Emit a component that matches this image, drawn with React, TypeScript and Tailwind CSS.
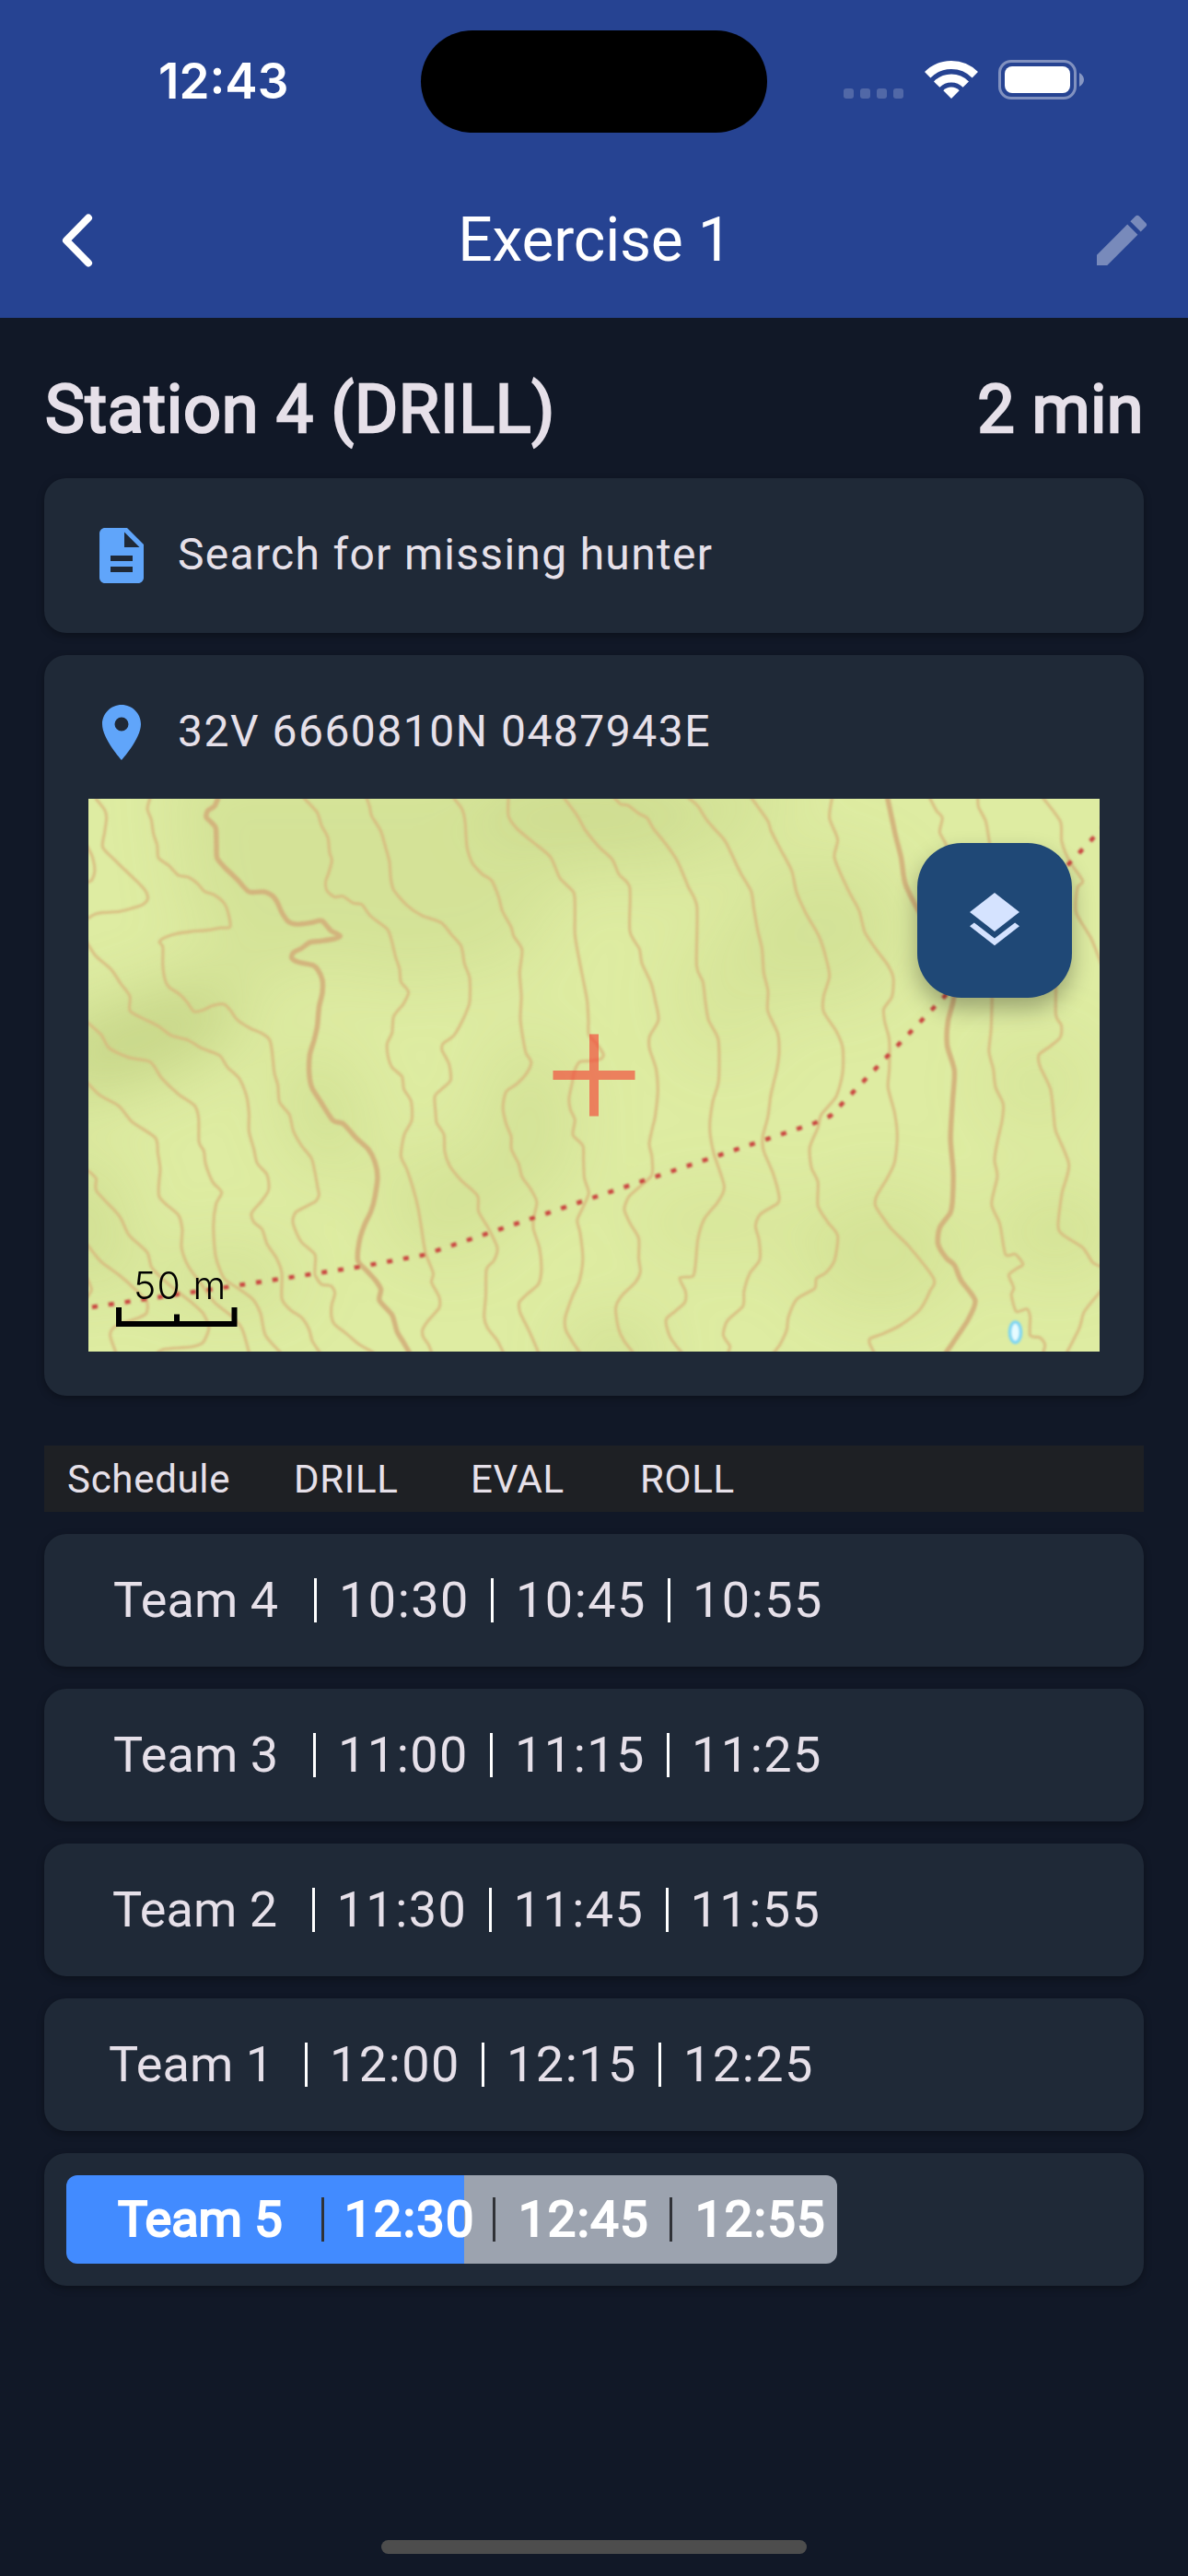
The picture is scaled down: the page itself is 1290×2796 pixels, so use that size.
import React from "react";
import { MdDescription, MdEdit, MdLayers, MdLocationOn } from "react-icons/md";

type Point = [number, number];

const MAP_W = 1098;
const MAP_H = 600;

function survey(source: string, tile: "west" | "east"): Point[] {
  const dx = tile === "west" ? -6 : 544;
  return source.split(" ").map((pair) => {
    const [x, y] = pair.split(",").map(Number);
    return [x / 2.8 + dx, y / 2.529 - 7] as Point;
  });
}

/* Catmull-Rom spline through the points */
function smooth(p: Point[]): string {
  let d = `M${p[0][0].toFixed(1)} ${p[0][1].toFixed(1)}`;
  for (let i = 0; i < p.length - 1; i++) {
    const a = p[Math.max(i - 1, 0)];
    const b = p[i];
    const c = p[i + 1];
    const e = p[Math.min(i + 2, p.length - 1)];
    const k = 8;
    const n = [
      b[0] + (c[0] - a[0]) / k,
      b[1] + (c[1] - a[1]) / k,
      c[0] - (e[0] - b[0]) / k,
      c[1] - (e[1] - b[1]) / k,
      c[0],
      c[1],
    ].map((v) => v.toFixed(1));
    d += `C${n.join(" ")}`;
  }
  return d;
}

const west = [
  "40,18 66,48 72,70 66,110 60,150 90,180 130,215 165,245 190,270 197,292 182,308 150,318 110,327 60,330 35,335 17,345",
  "10,145 17,155 30,180 36,215 28,240 17,246",
  "205,14 196,45 208,75 215,115 226,145 230,180 260,200 290,227 320,233 350,252 370,272 400,282 430,305 443,335 447,370 420,372 380,378 330,382 285,388 250,398 233,410 243,425 243,475 250,515 262,535 295,555 320,580 338,602 365,598 395,585 430,582 450,600 470,625 510,648 545,662 568,680 575,710 582,770 593,805 598,850 628,885 640,930 665,970 695,1005 706,1045 714,1085 718,1105 708,1122 680,1136 648,1152 638,1175 645,1200 665,1235 705,1268 706,1300 706,1325 725,1350 755,1355 766,1375 756,1410 756,1440 765,1460 800,1485 840,1515 882,1537",
  "670,14 712,55 725,90 745,125 750,165 757,187 748,220 738,245 742,270 765,287 790,285 822,304 848,308 875,340 925,375 938,405 950,450 963,485 967,520 990,548 975,580 945,615 940,660 925,690 928,725 940,755 970,780 976,815 998,848 1000,900 977,940 967,998 985,1035 1005,1090 1020,1145 1030,1200 1042,1265 1065,1320 1060,1345 1083,1385 1083,1415 1050,1450 1033,1475 1035,1495 1050,1515 1060,1537",
  "862,14 872,40 878,65 905,105 920,150 932,190 936,235 945,268 985,310 1030,338 1090,358 1120,390 1150,422 1160,470 1176,510 1176,575 1160,615 1130,665 1095,690 1092,708 1113,745 1118,790 1090,815 1070,835 1073,885 1076,908 1098,940 1100,985 1115,1025 1150,1065 1200,1108 1203,1150 1235,1200 1260,1250 1250,1285 1227,1310 1225,1380 1220,1440 1230,1470 1260,1505 1278,1537",
  "1126,14 1152,45 1162,80 1168,150 1185,195 1215,225 1243,242 1265,290 1275,325 1302,370 1310,395 1335,432 1328,495 1333,560 1330,620 1337,670 1347,715 1363,740 1350,770 1320,800 1287,822 1277,865 1287,910 1302,945 1303,980 1325,1020 1335,1055 1362,1090 1380,1125 1370,1170 1370,1200 1388,1250 1394,1310 1385,1350 1350,1378 1327,1400 1330,1430 1355,1475 1385,1537",
  "1294,14 1294,65 1320,100 1370,138 1422,178 1450,235 1492,275 1496,320 1496,390 1507,450 1520,510 1533,570 1537,625 1538,665 1562,690 1582,718 1575,732 1545,737 1510,740 1495,765 1487,800 1478,840 1482,870 1496,900 1490,940 1520,970 1522,1010 1525,1060 1538,1100 1520,1140 1503,1175 1512,1210 1520,1280 1510,1340 1490,1380 1467,1440 1468,1475 1490,1510 1510,1537",
  "1462,14 1500,60 1525,100 1550,130 1575,155 1610,185 1630,225 1663,262 1663,380 1692,430 1700,470 1728,525 1740,570 1750,625 1723,670 1723,705 1743,760 1748,820 1740,890 1732,920 1722,965 1730,1000 1730,1050 1690,1085 1660,1110 1646,1145 1665,1185 1690,1225 1690,1280 1695,1315 1680,1345 1640,1380 1620,1415 1628,1470 1645,1505 1672,1537",
  "12,412 40,450 85,485 115,525 143,560 143,600 185,622 230,642 270,668 320,680 360,702 415,722 440,755 475,785 498,835 505,880 505,930 520,980 530,1018 560,1050 565,1090 545,1120 513,1155 520,1180 545,1200 560,1240 588,1278 605,1320 605,1390 630,1420 665,1442 688,1475 697,1505 720,1537",
  "12,630 55,665 80,702 140,728 205,740 240,785 290,828 340,860 352,895 353,960 368,985 373,1020 395,1070 422,1098 405,1130 397,1190 404,1275 430,1335 470,1360 515,1390 540,1430 555,1490 600,1537",
  "12,796 50,830 110,862 150,905 220,948 228,990 235,1035 232,1110 290,1160 302,1200 300,1250 320,1300 360,1350 400,1400 455,1440 485,1475 505,1537",
  "12,1036 40,1060 42,1095 110,1162 140,1215 195,1262 210,1305 260,1350 330,1400 365,1430 383,1470 365,1510 330,1522 250,1528 228,1537",
  "12,1240 55,1288 110,1325 160,1365 195,1400 193,1430 170,1442 100,1465 83,1490 100,1537",
  "14,1335 26,1365 14,1385",
];

const east = [
  "74,14 95,32 118,36 150,58 175,70 195,100 235,145 268,190 300,258 327,315 326,475 345,520 352,570 362,625 392,680 393,790 375,850 366,920 378,990 410,1082 390,1125 350,1170 330,1225 323,1290 315,1328 275,1333 292,1370 290,1400 260,1425 233,1448 243,1490 260,1515 280,1537",
  "300,14 330,38 360,80 410,130 430,165 460,222 492,272 500,320 512,380 525,430 530,495 543,545 542,600 572,660 577,710 570,760 552,830 543,890 527,945 530,985 558,1045 577,1110 570,1130 520,1158 505,1190 516,1230 518,1283 488,1320 470,1370 467,1410 420,1450 407,1490 427,1520 422,1537",
  "490,12 542,78 552,105 577,150 615,215 630,275 660,335 698,395 718,450 730,505 712,560 712,602 750,655 770,700 770,770 750,835 705,885 695,920 670,975 675,1030 695,1070 695,1135 725,1180 755,1218 745,1285 720,1318 690,1335 685,1362 632,1390 605,1440 600,1475 580,1515 562,1537",
  "738,14 730,70 755,130 745,180 785,265 820,325 838,385 875,435 908,475 924,510 920,560 895,595 898,630 912,680 912,760 908,810 928,880 936,945 928,1015 905,1060 875,1105 870,1135 915,1195 970,1245 1047,1335 1035,1370 1005,1420 945,1463 895,1485 853,1500 853,1515 865,1537",
  "1034,14 1055,50 1073,70 1065,110 1085,145 1120,250 1200,400 1223,500 1222,640 1215,710 1228,760 1235,810 1258,855 1255,900 1240,960 1232,1010 1240,1055 1223,1130 1248,1185 1265,1268 1295,1268 1318,1295 1300,1307 1275,1325 1290,1360 1283,1380 1298,1425 1330,1418 1340,1440 1340,1490 1370,1497 1385,1515 1380,1537",
  "1181,14 1183,40 1205,80 1217,140 1240,250 1380,400 1416,500 1418,610 1435,640 1432,672 1400,698 1367,720 1370,752 1402,815 1412,890 1418,930 1458,1022 1437,1100 1425,1190 1440,1215 1500,1250 1530,1290 1556,1302",
  "1378,14 1432,80 1436,135 1460,190 1500,243 1484,262 1480,330 1525,400 1556,470",
  "1556,1368 1505,1425 1490,1470 1452,1537",
];

const indexWest =
  "412,14 400,38 380,50 375,68 390,82 404,98 406,140 408,180 430,205 470,240 505,273 550,273 575,283 590,300 605,330 625,355 650,362 690,358 725,352 740,365 755,380 782,394 765,402 725,408 690,412 665,428 640,440 635,455 655,466 700,475 715,488 728,515 728,550 718,590 713,640 703,680 690,720 688,770 696,810 720,845 760,900 792,910 830,948 868,980 888,1015 896,1055 888,1110 876,1150 855,1190 840,1235 836,1285 860,1310 890,1340 906,1365 902,1395 940,1435 955,1480 975,1510 992,1537";
const indexEast =
  "906,14 930,115 948,180 960,250 997,320 1050,400 1108,500 1108,565 1090,630 1088,695 1110,765 1104,850 1098,950 1106,1040 1104,1120 1097,1155 1065,1195 1060,1240 1085,1278 1110,1298 1130,1340 1173,1395 1150,1450 1085,1537";
const trail =
  "28,1413 437,1358 837,1303 1036,1270 1272,1198 1560,1110 2228,907 2273,888 2620,560 3000,194 3100,98";

function TopoMap() {
  return (
    <svg width={MAP_W} height={MAP_H} viewBox={`0 0 ${MAP_W} ${MAP_H}`} className="block">
      <defs>
        <filter id="relief" x="-20%" y="-20%" width="140%" height="140%">
          <feGaussianBlur stdDeviation="34" />
        </filter>
        <filter id="ink" x="-5%" y="-5%" width="110%" height="110%">
          <feGaussianBlur stdDeviation="0.9" />
        </filter>
      </defs>
      <rect width={MAP_W} height={MAP_H} fill="#deeca2" />
      <g filter="url(#relief)" fill="#b5c474">
        <path d="M90 -40H780L720 60L620 90L520 80L470 180L340 200L250 180L180 210L110 130Z" opacity="0.24" />
        <path d="M-40 250L60 215L140 190L170 250L80 300L-40 330Z" opacity="0.58" />
        <path d="M-40 380L30 400L50 520L-40 540Z" opacity="0.32" />
        <ellipse cx="255" cy="340" rx="40" ry="70" opacity="0.28" transform="rotate(-20 255 340)" />
        <ellipse cx="480" cy="350" rx="50" ry="90" opacity="0.24" />
        <ellipse cx="390" cy="440" rx="70" ry="60" opacity="0.22" />
        <ellipse cx="540" cy="15" rx="120" ry="40" opacity="0.2" />
        <ellipse cx="800" cy="140" rx="90" ry="80" opacity="0.24" />
        <ellipse cx="690" cy="210" rx="60" ry="80" opacity="0.14" />
        <ellipse cx="860" cy="490" rx="90" ry="70" opacity="0.22" />
        <ellipse cx="1050" cy="470" rx="70" ry="50" opacity="0.22" />
        <ellipse cx="1030" cy="310" rx="60" ry="50" opacity="0.16" />
        <ellipse cx="570" cy="600" rx="50" ry="24" opacity="0.45" />
        <ellipse cx="150" cy="520" rx="80" ry="34" opacity="0.26" />
        <ellipse cx="680" cy="460" rx="90" ry="40" opacity="0.14" />
      </g>
      <g fill="none" strokeLinecap="round" strokeLinejoin="round" filter="url(#ink)">
        <g stroke="#d8b67c" strokeWidth="3.3" opacity="0.76">
          {west.map((line) => (
            <path key={line} d={smooth(survey(line, "west"))} />
          ))}
          {east.map((line) => (
            <path key={line} d={smooth(survey(line, "east"))} />
          ))}
        </g>
        <g stroke="#d3b07b" strokeWidth="5.4" opacity="0.92">
          <path d={smooth(survey(indexWest, "west"))} />
          <path d={smooth(survey(indexEast, "east"))} />
        </g>
        <path
          d={"M" + survey(trail, "west").map((p) => p.join(" ")).join("L")}
          stroke="#c94440"
          strokeWidth="4.6"
          strokeLinecap="butt"
          strokeDasharray="6 12"
        />
        <ellipse cx="1006.500" cy="579" rx="6" ry="11" fill="#e6fbff" stroke="#7fd6f3" strokeWidth="3.6" />
      </g>
      <path
        d="M544 255.500h10v39.500h39.500v10h-39.500v39.500h-10v-39.500h-39.500v-10h39.500z"
        fill="#f44336"
        opacity="0.64"
      />
      <path d="M33 552V570H158.500V552M96 559.500V570" fill="none" stroke="#000" strokeWidth="6" />
    </svg>
  );
}

function StatusBar() {
  return (
    <div className="flex h-[177px] items-start">
      <div className="w-[457px] pt-[57px] pl-[172px] font-['Inter'] text-[53px] leading-[62px] font-semibold tracking-normal text-white">
        12:43
      </div>
      <div className="mt-[33px] h-[111px] w-[376px] rounded-full bg-black" />
      <div className="mt-[64px] ml-[83px] flex h-[44px] items-start">
        <div className="mt-[32px] flex gap-[7px]">
          {[0, 1, 2, 3].map((n) => (
            <div key={n} className="size-[11px] rounded-[3px] bg-white/20" />
          ))}
        </div>
        <svg width="58" height="44" viewBox="0 0 58 44" className="ml-[23px]">
          <g fill="none" stroke="#fff">
            <path d="M3.200 17.200A36.500 36.500 0 0 1 54.800 17.200" strokeWidth="9" />
            <path d="M13.200 27.600A22.200 22.200 0 0 1 44.800 27.600" strokeWidth="9" />
          </g>
          <path d="M29 43L20.300 34.200A12.300 12.300 0 0 1 37.700 34.200Z" fill="#fff" />
        </svg>
        <svg width="94" height="44" viewBox="0 0 94 44" className="ml-[22px]">
          <rect x="1.500" y="2.500" width="82" height="40" rx="12.500" fill="none" stroke="#fff" strokeOpacity="0.42" strokeWidth="3" />
          <rect x="7" y="8" width="71" height="29" rx="8" fill="#fff" />
          <path d="M88 15C91 16.500 93 19.500 93 22.500S91 28.500 88 30Z" fill="#fff" fillOpacity="0.45" />
        </svg>
      </div>
    </div>
  );
}

function AppBar() {
  return (
    <div className="grid h-[168px] grid-cols-[1fr_auto_1fr] items-center pr-9 pl-[60px] text-white">
      <svg width="48" height="64" viewBox="0 0 48 64" fill="none" stroke="#fff" strokeWidth="8" strokeLinecap="round" strokeLinejoin="round">
        <path d="M36 7.500L12 32L36 56.500" />
      </svg>
      <h1 className="-translate-x-[11px] text-[66px] leading-[84px] font-normal tracking-[-0.2px]">Exercise 1</h1>
      <MdEdit className="size-[72px] justify-self-end text-white/38" />
    </div>
  );
}

const rows = [
  { team: "Team 4", times: ["10:30", "10:45", "10:55"], pad: "pl-[75px]", label: "w-[218px]" },
  { team: "Team 3", times: ["11:00", "11:15", "11:25"], pad: "pl-[75px]", label: "w-[217px]" },
  { team: "Team 2", times: ["11:30", "11:45", "11:55"], pad: "pl-[74px]", label: "w-[216.500px]" },
  { team: "Team 1", times: ["12:00", "12:15", "12:25"], pad: "pl-[70px]", label: "w-[213px]" },
];

export default function App() {
  return (
    <div className="flex h-[2796px] w-[1290px] flex-col overflow-hidden bg-[#111827] font-['Roboto',sans-serif] text-[#e6e0e9]">
      <header className="bg-[#264392]">
        <StatusBar />
        <AppBar />
      </header>

      <main className="flex flex-col px-12">
        <div className="flex h-[174px] items-center justify-between pt-[25px] text-[72px] leading-[96px] font-normal [-webkit-text-stroke:2.4px_#e6e0e9]">
          <h2 className="pl-px tracking-[0.7px]">Station 4 (DRILL)</h2>
          <span className="tracking-[0.4px]">2 min</span>
        </div>

        <section className="flex items-center gap-6 rounded-3xl bg-[#1f2937] p-12 shadow-[0_3px_8px_rgba(0,0,0,0.3)]">
          <MdDescription className="size-[72px] text-[#60a5fa]" />
          <p className="pb-[2px] pl-px text-[48px] leading-[70px] tracking-[1.300px]">Search for missing hunter</p>
        </section>

        <section className="mt-6 rounded-3xl bg-[#1f2937] p-12 shadow-[0_3px_8px_rgba(0,0,0,0.3)]">
          <div className="flex items-center gap-6">
            <MdLocationOn className="size-[72px] text-[#60a5fa]" />
            <p className="pb-[2px] pl-px text-[48px] leading-[70px] tracking-[1.5px]">32V 6660810N 0487943E</p>
          </div>
          <div className="relative mt-9 h-[600px] overflow-hidden">
            <TopoMap />
            <span className="absolute top-[504px] left-[49px] font-['Inter'] text-[41px] leading-[48px] font-[350] tracking-[1.1px] text-black">
              50 m
            </span>
            <button className="absolute top-12 right-[30px] flex size-[168px] items-center justify-center rounded-[48px] bg-[#1f4876] shadow-[0_12px_24px_rgba(0,0,0,0.3)]">
              <MdLayers className="size-[72px] text-[#d5e3ff]" />
            </button>
          </div>
        </section>

        <div className="mt-[54px] flex h-[72px] items-center bg-[#1e2024] pt-[2px] pl-[25px] text-[42px] leading-[60px] tracking-[0.7px]">
          <span className="w-[246px]">Schedule</span>
          <span className="w-[192px]">DRILL</span>
          <span className="w-[184px]">EVAL</span>
          <span>ROLL</span>
        </div>

        {rows.map((row) => (
          <div
            key={row.team}
            className={`mt-6 flex h-36 items-center rounded-3xl bg-[#1f2937] text-[54px] leading-[72px] tracking-[1.5px] shadow-[0_3px_8px_rgba(0,0,0,0.3)] ${row.pad}`}
          >
            <span className={`tracking-[0.1px] ${row.label}`}>{row.team}</span>
            {row.times.map((time) => (
              <React.Fragment key={time}>
                <span className="h-12 w-[3px] bg-white" />
                <span className="w-[189px] pl-px text-center">{time}</span>
              </React.Fragment>
            ))}
          </div>
        ))}

        <div className="mt-6 flex h-36 items-center rounded-3xl bg-[#1f2937] pl-6 shadow-[0_3px_8px_rgba(0,0,0,0.3)]">
          <div className="flex h-24 w-[837px] items-center rounded-xl bg-[linear-gradient(90deg,#428bff_431.500px,#9ca3af_431.500px)] text-[54px] leading-[72px] font-normal tracking-[1.5px] text-white [-webkit-text-stroke:2.2px_#fff]">
            <span className="w-[277px] pl-[56px] tracking-normal">Team 5</span>
            <span className="h-12 w-[3px] bg-[#303237]" />
            <span className="w-[183px] pl-[3px] text-center">12:30</span>
            <span className="h-12 w-[3px] bg-[#303237]" />
            <span className="w-[189px] pl-[3px] text-center">12:45</span>
            <span className="h-12 w-[3px] bg-[#303237]" />
            <span className="pl-[25px]">12:55</span>
          </div>
        </div>
      </main>

      <div className="mx-auto mt-auto mb-6 h-[15px] w-[462px] rounded-full bg-[#4d4d4d]" />
    </div>
  );
}
